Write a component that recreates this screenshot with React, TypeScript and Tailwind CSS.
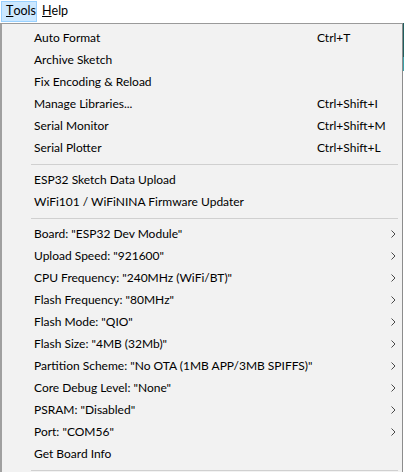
import React from 'react';

type Item =
  | { kind: 'item'; label: string; shortcut?: string; sub?: boolean }
  | { kind: 'sep' };

const items: Item[] = [
  { kind: 'item', label: 'Auto Format', shortcut: 'Ctrl+T' },
  { kind: 'item', label: 'Archive Sketch' },
  { kind: 'item', label: 'Fix Encoding & Reload' },
  { kind: 'item', label: 'Manage Libraries...', shortcut: 'Ctrl+Shift+I' },
  { kind: 'item', label: 'Serial Monitor', shortcut: 'Ctrl+Shift+M' },
  { kind: 'item', label: 'Serial Plotter', shortcut: 'Ctrl+Shift+L' },
  { kind: 'sep' },
  { kind: 'item', label: 'ESP32 Sketch Data Upload' },
  { kind: 'item', label: 'WiFi101 / WiFiNINA Firmware Updater' },
  { kind: 'sep' },
  { kind: 'item', label: 'Board: "ESP32 Dev Module"', sub: true },
  { kind: 'item', label: 'Upload Speed: "921600"', sub: true },
  { kind: 'item', label: 'CPU Frequency: "240MHz (WiFi/BT)"', sub: true },
  { kind: 'item', label: 'Flash Frequency: "80MHz"', sub: true },
  { kind: 'item', label: 'Flash Mode: "QIO"', sub: true },
  { kind: 'item', label: 'Flash Size: "4MB (32Mb)"', sub: true },
  { kind: 'item', label: 'Partition Scheme: "No OTA (1MB APP/3MB SPIFFS)"', sub: true },
  { kind: 'item', label: 'Core Debug Level: "None"', sub: true },
  { kind: 'item', label: 'PSRAM: "Disabled"', sub: true },
  { kind: 'item', label: 'Port: "COM56"', sub: true },
  { kind: 'item', label: 'Get Board Info' },
  { kind: 'sep' },
];

const Chevron = () => (
  <svg width="5" height="8" viewBox="0 0 5 8" className="block">
    <polyline points="0.5,0.5 4,4 0.5,7.5" fill="none" stroke="#4a4a4a" strokeWidth="1" />
  </svg>
);

export default function App() {
  return (
    <div className="w-[404px] h-[472px] bg-white overflow-hidden text-[12px] text-black font-['Lato','Liberation_Sans',Arial,sans-serif]">
      {/* menu bar */}
      <div className="h-[23px] flex items-start pt-[1px] pl-[1px] whitespace-nowrap">
        <div className="h-[21px] w-[36px] bg-[#cce8ff] border border-[#99d1ff] flex items-center pl-[4px] text-[12.5px]">
          <span className="underline decoration-1 underline-offset-1">T</span>
          <span>ools</span>
        </div>
        <div className="h-[21px] flex items-center pl-[5px] text-[12.5px]">
          <span className="underline decoration-1 underline-offset-1">H</span>
          <span>elp</span>
        </div>
      </div>

      {/* dropdown */}
      <div className="flex">
        <div className="w-[403px] h-[449px] bg-[#f2f2f2] border-t border-t-[#9a9a9a] border-l-2 border-l-[#a0a0a0] border-r border-r-[#8c8c8c] pt-[3px]">
          {items.map((it, i) =>
            it.kind === 'sep' ? (
              <div key={i} className="h-[10px] flex items-center pl-[29px] pr-[4px]">
                <div className="h-px w-full bg-[#d0d0d0]" />
              </div>
            ) : (
              <div key={i} className="h-[22px] flex items-center pl-[32px]">
                <span className="w-[283px] whitespace-nowrap">{it.label}</span>
                <span className="flex-1 whitespace-nowrap">{it.shortcut}</span>
                <span className="w-[11px] flex items-center">{it.sub && <Chevron />}</span>
              </div>
            )
          )}
        </div>
        <div className="w-px flex flex-col">
          <div className="h-[34px] bg-[#1f5e5e]" />
          <div className="h-[14px] bg-[#3aa0a8]" />
        </div>
      </div>
    </div>
  );
}
